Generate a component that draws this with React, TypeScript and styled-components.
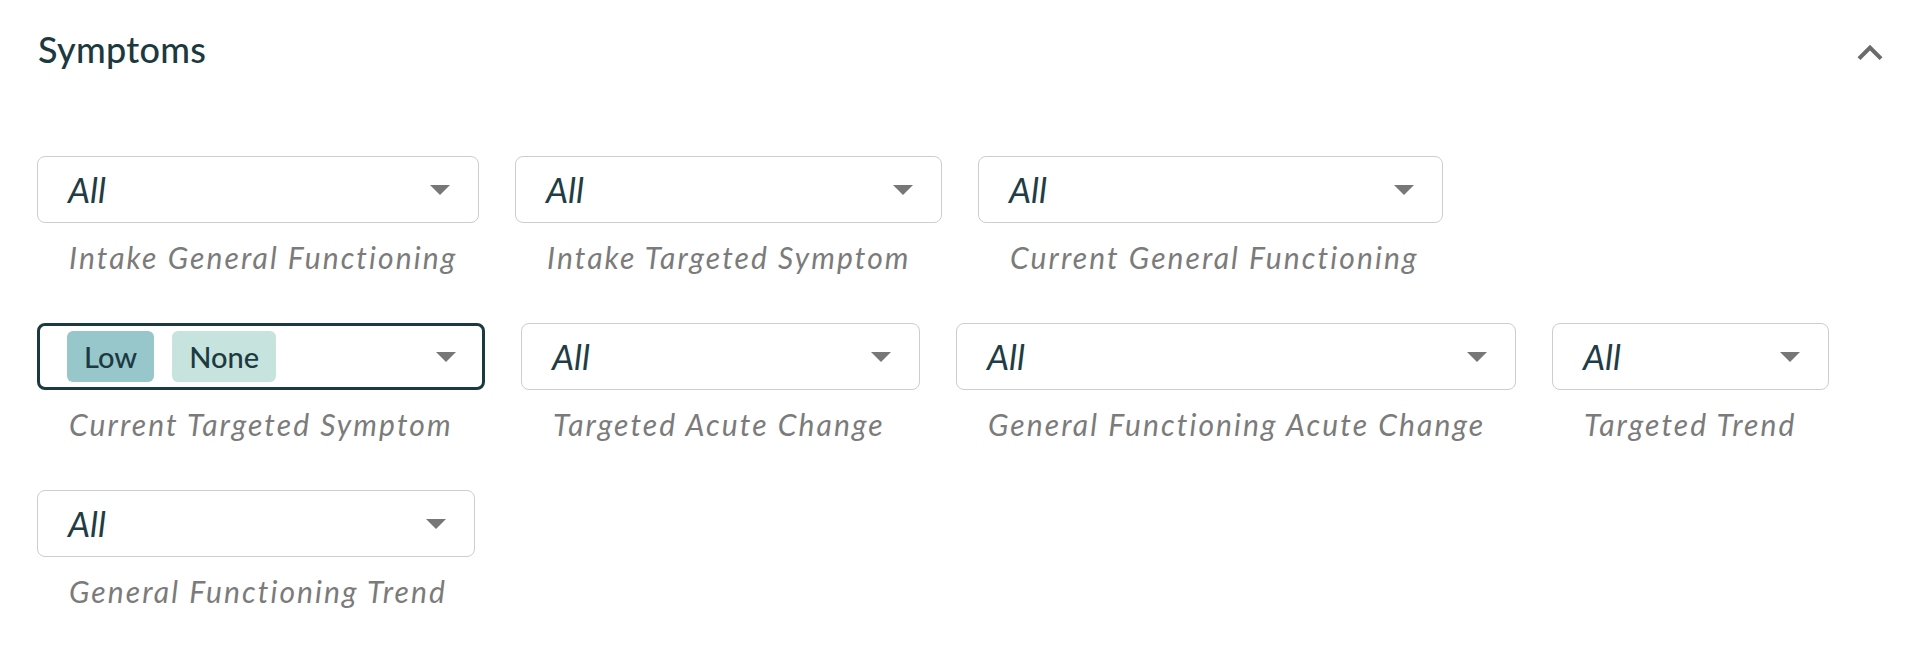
import styled, { createGlobalStyle } from 'styled-components';

interface FilterDef {
  label: string;
  width: number;
  chips?: { text: string; tone: 'strong' | 'soft' }[];
  focused?: boolean;
}

const rows: FilterDef[][] = [
  [
    { label: 'Intake General Functioning', width: 442 },
    { label: 'Intake Targeted Symptom', width: 427 },
    { label: 'Current General Functioning', width: 465 },
  ],
  [
    {
      label: 'Current Targeted Symptom',
      width: 448,
      focused: true,
      chips: [
        { text: 'Low', tone: 'strong' },
        { text: 'None', tone: 'soft' },
      ],
    },
    { label: 'Targeted Acute Change', width: 399 },
    { label: 'General Functioning Acute Change', width: 560 },
    { label: 'Targeted Trend', width: 277 },
  ],
  [{ label: 'General Functioning Trend', width: 438 }],
];

export default function App() {
  return (
    <>
      <GlobalStyle />
      <Section>
        <Header>
          <Title>Symptoms</Title>
          <CollapseButton aria-label="Collapse">
            <svg width="50" height="50" viewBox="0 0 24 24">
              <path d="M12 8l-6 6 1.41 1.41L12 10.83l4.59 4.58L18 14z" fill="#6b6b6b" />
            </svg>
          </CollapseButton>
        </Header>
        <Rows>
          {rows.map((row, i) => (
            <Row key={i}>
              {row.map((f) => (
                <Field key={f.label}>
                  <SelectBox $width={f.width} $focused={!!f.focused}>
                    {f.chips ? (
                      <Chips>
                        {f.chips.map((c) => (
                          <Chip key={c.text} $tone={c.tone}>
                            {c.text}
                          </Chip>
                        ))}
                      </Chips>
                    ) : (
                      <Value>All</Value>
                    )}
                    <Arrow />
                  </SelectBox>
                  <Label>{f.label}</Label>
                </Field>
              ))}
            </Row>
          ))}
        </Rows>
      </Section>
    </>
  );
}

const GlobalStyle = createGlobalStyle`
  body {
    margin: 0;
    background: #fff;
    font-family: Lato, 'Noto Sans', sans-serif;
  }
`;

const Section = styled.section`
  padding: 28px 25px 0 37px;
`;

const Header = styled.div`
  display: flex;
  justify-content: space-between;
  align-items: flex-start;
  height: 50px;
`;

const Title = styled.h2`
  margin: 0;
  padding-left: 1px;
  font-size: 36px;
  line-height: 43px;
  font-weight: 500;
  letter-spacing: 0.3px;
  color: #1d3940;
`;

const CollapseButton = styled.button`
  border: none;
  background: none;
  padding: 0;
  width: 50px;
  height: 50px;
  cursor: pointer;

  svg {
    display: block;
  }
`;

const Rows = styled.div`
  display: flex;
  flex-direction: column;
  gap: 48px;
  margin-top: 78px;
`;

const Row = styled.div`
  display: flex;
  gap: 36px;
`;

const Field = styled.div`
  display: flex;
  flex-direction: column;
`;

const SelectBox = styled.div<{ $width: number; $focused: boolean }>`
  box-sizing: border-box;
  width: ${(p) => p.$width}px;
  height: 67px;
  display: flex;
  align-items: center;
  justify-content: space-between;
  border: ${(p) => (p.$focused ? '3px solid #1b3940' : '1.5px solid #cdcdcd')};
  border-radius: 8px;
  padding: ${(p) => (p.$focused ? '0 26px 0 27px' : '0 28px 0 30px')};
  background: #fff;
`;

const Value = styled.span`
  font-size: 35px;
  font-style: italic;
  color: #1f3d45;
  line-height: 1;
`;

const Chips = styled.div`
  display: flex;
  gap: 18px;
`;

const Chip = styled.span<{ $tone: 'strong' | 'soft' }>`
  display: flex;
  align-items: center;
  height: 51px;
  padding: 0 17px;
  border-radius: 6px;
  font-size: 29px;
  font-weight: 500;
  color: #1b3a41;
  background: ${(p) => (p.$tone === 'strong' ? '#97c7cb' : '#c6e3dd')};
`;

const Arrow = styled.span`
  width: 0;
  height: 0;
  border-left: 10px solid transparent;
  border-right: 10px solid transparent;
  border-top: 10px solid #777;
`;

const Label = styled.span`
  margin-top: 16px;
  padding-left: 32px;
  font-size: 30px;
  line-height: 36px;
  font-style: italic;
  font-weight: 400;
  letter-spacing: 2.1px;
  color: #7b7b7b;
  white-space: nowrap;
`;
